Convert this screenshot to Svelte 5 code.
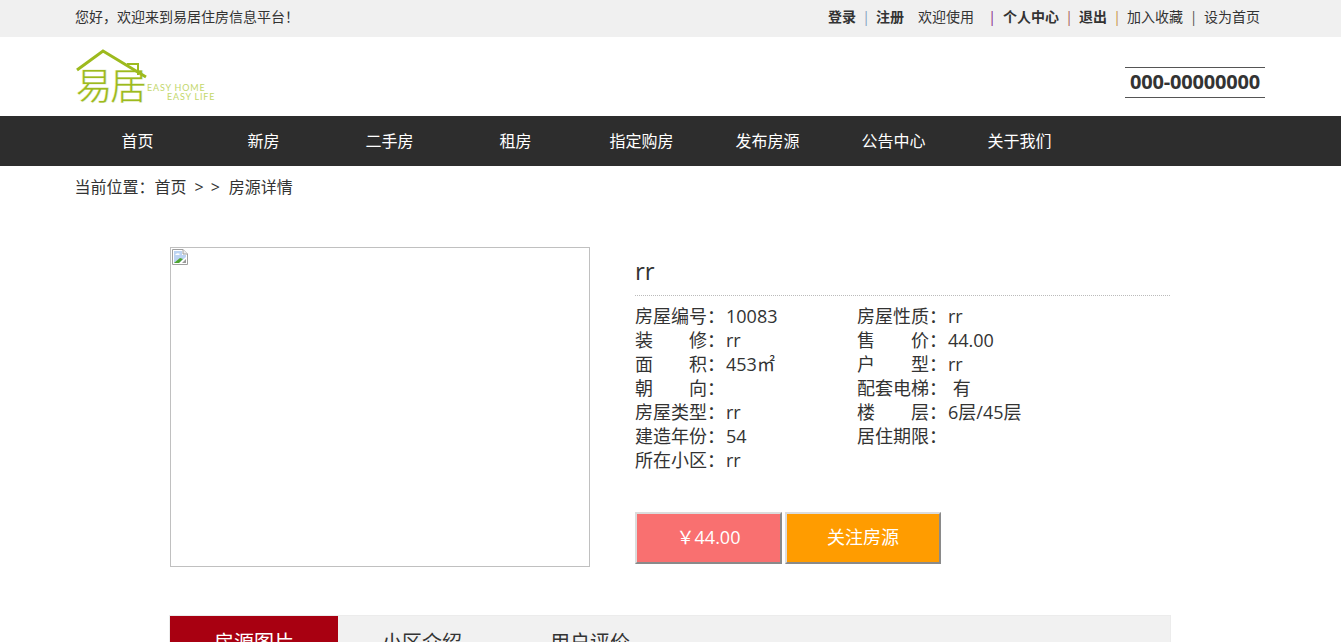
<script>
  const nav = ['首页', '新房', '二手房', '租房', '指定购房', '发布房源', '公告中心', '关于我们'];
  const rows = [
    ['房屋编号：', '10083', '房屋性质：', 'rr'],
    ['装　　修：', 'rr', '售　　价：', '44.00'],
    ['面　　积：', '453㎡', '户　　型：', 'rr'],
    ['朝　　向：', '', '配套电梯：', ' 有'],
    ['房屋类型：', 'rr', '楼　　层：', '6层/45层'],
    ['建造年份：', '54', '居住期限：', ''],
    ['所在小区：', 'rr', '', '']
  ];
  const tabs = ['房源图片', '小区介绍', '用户评价'];
</script>

<div class="page">
  <div class="topbar">
    <div class="hello">您好，欢迎来到易居住房信息平台！</div>
    <div class="links">
      <b>登录</b><i class="sep blue">|</i><b>注册</b>
      <span class="welcome">欢迎使用</span><i class="sep purple">|</i><b>个人中心</b><i class="sep red">|</i><b>退出</b><i class="sep orange">|</i><span>加入收藏</span><i class="sep">|</i><span>设为首页</span>
    </div>
  </div>

  <header class="header">
    <svg class="logo" width="146" height="66" viewBox="0 0 146 66" aria-label="易居">
      <text class="mark" x="0.5" y="53">易</text>
      <text class="mark" x="35" y="53">居</text>
      <path d="M2 23 L28 4 L71 30" fill="none" stroke="#9dba1e" stroke-width="3" />
      <path d="M52 17 H63 V28" fill="none" stroke="#9dba1e" stroke-width="2" />
      <text class="slogan" x="72" y="44">EASY HOME</text>
      <text class="slogan" x="92" y="52.5">EASY LIFE</text>
    </svg>
    <div class="phone">000-00000000</div>
  </header>

  <nav class="nav">
    {#each nav as item}
      <a href="#top">{item}</a>
    {/each}
  </nav>

  <div class="crumb">当前位置：<span class="home">首页</span><span class="gt">&gt;</span><span class="gt">&gt;</span><span class="here">房源详情</span></div>

  <section class="detail">
    <div class="photo">
      <svg width="16" height="16" viewBox="0 0 16 16" aria-hidden="true">
        <path d="M0.5 0.5 H11 L15.5 5 V15.5 H0.5 Z" fill="#fff" stroke="#a0a0a0" />
        <path d="M11 0.5 V5 H15.5" fill="#eee" stroke="#a0a0a0" />
        <path d="M2 2 H10 V6 H14 V8 L7 14 H2 Z" fill="#bcd3f2" />
        <path d="M3 6 q2 -3 5 -1 l-1 1 z" fill="#fff" />
        <path d="M2 14 L8 9 L11 10 L7 14 Z" fill="#4ea52f" />
        <path d="M10 14 L14 10 V14 Z" fill="#9a9a9a" />
      </svg>
    </div>
    <div class="info">
      <h1>rr</h1>
      <div class="rows">
        {#each rows as r}
          <div class="cell">{r[0]}<span class="val">{r[1]}</span></div>
          <div class="cell">{r[2]}<span class="val">{r[3]}</span></div>
        {/each}
      </div>
      <div class="actions">
        <button class="price">￥44.00</button>
        <button class="follow">关注房源</button>
      </div>
    </div>
  </section>

  <div class="tabs">
    {#each tabs as t, i}
      <div class="tab" class:active={i === 0}>{t}</div>
    {/each}
  </div>
</div>

<style>
  :global(body) {
    margin: 0;
    background: #fff;
  }

  .page {
    height: 642px;
    overflow: hidden;
    color: #333;
    font-family: "Open Sans", "Noto Sans CJK SC", sans-serif;
  }

  .topbar {
    display: flex;
    justify-content: space-between;
    box-sizing: border-box;
    height: 37px;
    padding: 7px 81px 0 75px;
    background: #f0f0f0;
    font-size: 14px;
    line-height: 20px;
  }

  .links {
    display: flex;
  }

  .links b {
    font-weight: 700;
  }

  .welcome {
    margin-left: 14px;
  }

  .sep {
    width: 21px;
    font-style: normal;
    text-align: center;
    color: #555;
  }

  .blue { width: 20px; color: #7f9fc0; }
  .purple { width: 29px; padding-left: 7px; box-sizing: border-box; color: #8a2a8a; }
  .red { width: 20px; color: #a8605a; }
  .orange { width: 20px; color: #c8904a; }

  .header {
    display: flex;
    justify-content: space-between;
    align-items: flex-start;
    height: 79px;
    padding: 0 76px 0 75px;
  }

  .logo {
    margin-top: 10px;
  }

  .mark {
    font-size: 37px;
    fill: #9dba1e;
    stroke: #fff;
    stroke-width: 0.5px;
    font-family: "Noto Sans CJK SC", sans-serif;
  }

  .slogan {
    font-size: 9px;
    letter-spacing: 0.8px;
    fill: #c3d76a;
    font-family: Lato, sans-serif;
  }

  .phone {
    width: 140px;
    height: 29px;
    margin-top: 30px;
    border-top: 1px solid #555;
    border-bottom: 1px solid #555;
    font-size: 20px;
    font-weight: 700;
    letter-spacing: -0.2px;
    line-height: 28px;
    text-align: center;
  }

  .nav {
    display: flex;
    height: 50px;
    padding-left: 74.5px;
    background: #2d2d2d;
  }

  .nav a {
    width: 126px;
    color: #fff;
    font-size: 16px;
    line-height: 50px;
    text-align: center;
    text-decoration: none;
  }

  .crumb {
    height: 43px;
    padding-left: 74.5px;
    font-size: 16px;
    line-height: 43px;
  }

  .home {
    margin-right: 1px;
  }

  .gt {
    margin-left: 7px;
  }

  .here {
    margin-left: 9px;
  }

  .detail {
    display: flex;
    gap: 45px;
    height: 320px;
    margin: 38px 0 0 170px;
    width: 1000px;
  }

  .photo {
    box-sizing: border-box;
    flex: none;
    width: 420px;
    height: 320px;
    padding: 1px;
    border: 1px solid #c0c0c0;
  }

  .photo svg {
    display: block;
  }

  .info {
    flex: 1;
  }

  h1 {
    box-sizing: border-box;
    height: 49px;
    margin: 0 0 9px;
    border-bottom: 1px dotted #bbb;
    font-size: 24px;
    font-weight: 400;
    line-height: 47px;
  }

  .rows {
    display: grid;
    grid-template-columns: 222px 1fr;
    font-size: 18px;
    line-height: 22px;
  }

  .cell {
    height: 24px;
    white-space: pre;
  }

  .val {
    margin-left: 1px;
  }

  .actions {
    display: flex;
    gap: 3px;
    margin-top: 39px;
  }

  button {
    height: 52px;
    padding: 0 0 4px;
    border: 2px solid;
    border-color: #dcdcdc #8a8a8a #8a8a8a #dcdcdc;
    color: #fff;
    font-family: inherit;
    font-size: 18px;
  }

  .price {
    width: 147px;
    background: #f97070;
  }

  .follow {
    width: 156px;
    background: #ff9c00;
  }

  .tabs {
    display: flex;
    width: 1000px;
    margin: 48px 0 0 169px;
    border: 1px solid #ececec;
    background: #f1f1f1;
  }

  .tab {
    width: 168px;
    height: 54px;
    font-size: 20px;
    line-height: 54px;
    text-align: center;
  }

  .active {
    background: #a80011;
    color: #fff;
  }
</style>
